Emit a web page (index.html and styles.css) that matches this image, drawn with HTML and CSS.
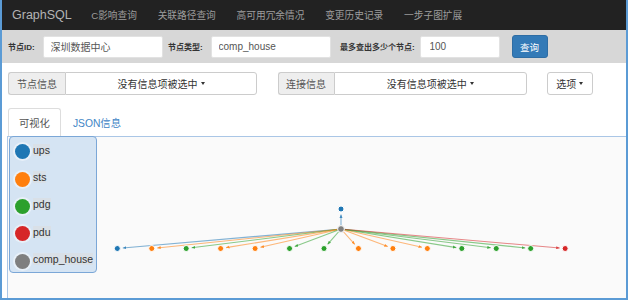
FILE: index.html
```html
<!DOCTYPE html>
<html lang="zh-CN">
<head>
    <meta charset="UTF-8">
    <meta name="viewport" content="width=device-width, initial-scale=1.0">
    <title>GraphSQL</title>
    <link rel="stylesheet" href="styles.css">
</head>
<body>
    <div class="frame">
        <nav class="navbar">
            <span class="brand">GraphSQL</span>
            <a class="nav-link">C影响查询</a>
            <a class="nav-link">关联路径查询</a>
            <a class="nav-link">高可用冗余情况</a>
            <a class="nav-link">变更历史记录</a>
            <a class="nav-link">一步子图扩展</a>
        </nav>

        <form class="query-bar" id="queryForm">
            <label class="lbl lbl-id" for="nodeId">节点ID:</label>
            <input class="field field-id" type="text" id="nodeId" value="深圳数据中心">
            <label class="lbl lbl-type" for="nodeType">节点类型:</label>
            <input class="field field-type" type="text" id="nodeType" value="comp_house">
            <label class="lbl lbl-max" for="maxNodes">最多查出多少个节点:</label>
            <input class="field field-max" type="text" id="maxNodes" value="100">
            <button class="btn-query" type="button">查询</button>
        </form>

        <div class="main">
            <div class="select-row">
                <span class="addon">节点信息</span>
                <button class="select select-node" type="button">没有信息项被选中 <span class="caret"></span></button>
                <span class="addon addon-link">连接信息</span>
                <button class="select select-link" type="button">没有信息项被选中 <span class="caret"></span></button>
                <button class="btn-options" type="button">选项 <span class="caret"></span></button>
            </div>

            <ul class="tabs">
                <li class="tab active">可视化</li>
                <li class="tab">JSON信息</li>
            </ul>

            <div class="graph-panel">
                <svg id="graph" width="618" height="161" viewBox="8 137 618 161"></svg>
                <div class="legend">
                    <div class="legend-item"><span class="dot ups"></span><span class="legend-label">ups</span></div>
                    <div class="legend-item"><span class="dot sts"></span><span class="legend-label">sts</span></div>
                    <div class="legend-item"><span class="dot pdg"></span><span class="legend-label">pdg</span></div>
                    <div class="legend-item"><span class="dot pdu"></span><span class="legend-label">pdu</span></div>
                    <div class="legend-item"><span class="dot comp"></span><span class="legend-label">comp_house</span></div>
                </div>
            </div>
        </div>
    </div>
    <script>
        const NS = "http://www.w3.org/2000/svg";
        const COLORS = {
            ups: "#1f77b4",
            sts: "#ff7f0e",
            pdg: "#2ca02c",
            pdu: "#d62728",
            comp_house: "#7f7f7f"
        };

        const center = { x: 341, y: 229, type: "comp_house" };
        const bottomTypes = ["ups", "sts", "pdg", "sts", "sts", "pdg", "pdg", "sts", "sts", "sts", "pdg", "pdg", "pdg", "pdu"];
        const nodes = [{ x: 341, y: 209, type: "ups" }];
        bottomTypes.forEach((type, i) => {
            nodes.push({ x: 117.3 + i * 34.45, y: 248.5, type: type });
        });

        function el(name, attrs) {
            const node = document.createElementNS(NS, name);
            for (const key in attrs) node.setAttribute(key, attrs[key]);
            return node;
        }

        function drawGraph() {
            const svg = document.getElementById("graph");
            const defs = el("defs", {});
            for (const type in COLORS) {
                const marker = el("marker", {
                    id: "arrow-" + type, viewBox: "0 -3 6 6", refX: 6, refY: 0,
                    markerWidth: 3.5, markerHeight: 3.5, markerUnits: "userSpaceOnUse", orient: "auto"
                });
                marker.appendChild(el("path", { d: "M0,-2.6L6,0L0,2.6", fill: COLORS[type], "fill-opacity": 0.8 }));
                defs.appendChild(marker);
            }
            svg.appendChild(defs);

            // links first so the nodes sit on top
            nodes.forEach(node => {
                const dx = node.x - center.x;
                const dy = node.y - center.y;
                const len = Math.sqrt(dx * dx + dy * dy);
                const endX = node.x - dx / len * 5.5;
                const endY = node.y - dy / len * 5.5;
                svg.appendChild(el("line", {
                    x1: center.x, y1: center.y, x2: endX, y2: endY,
                    class: "link", stroke: COLORS[node.type],
                    "marker-end": "url(#arrow-" + node.type + ")"
                }));
            });

            nodes.concat([center]).forEach(node => {
                svg.appendChild(el("circle", {
                    cx: node.x, cy: node.y, r: node === center ? 3.4 : 3,
                    class: "node", fill: COLORS[node.type]
                }));
            });
        }

        drawGraph();
    </script>
</body>
</html>
```

FILE: styles.css
```css
* {
    box-sizing: border-box;
}
body {
    margin: 0;
    font-family: "Liberation Sans", "Noto Sans CJK SC", sans-serif;
    color: #333333;
    background: #ffffff;
}
.frame {
    height: 300px;
    border: 2px solid #5b9bd5;
    border-top: none;
    display: flex;
    flex-direction: column;
    overflow: hidden;
}
.navbar {
    height: 30px;
    flex-shrink: 0;
    background-color: #222222;
    display: flex;
    align-items: center;
    padding-left: 10px;
    padding-bottom: 1px;
}
.brand {
    font-size: 12.5px;
    color: #b4b4b4;
    margin-right: 9px;
}
.nav-link {
    font-size: 9.7px;
    color: #9d9d9d;
    padding: 0 10.4px;
}
.query-bar {
    height: 33px;
    flex-shrink: 0;
    margin: 0;
    background-color: #d7d7d7;
    display: flex;
    align-items: center;
    padding-left: 6px;
}
.lbl {
    font-size: 8px;
    font-weight: bold;
    color: #333333;
}
.lbl-id {
    width: 34.5px;
}
.lbl-type {
    width: 42.5px;
    margin-left: 5.5px;
}
.lbl-max {
    width: 79.5px;
    margin-left: 9.5px;
}
.field {
    height: 22px;
    border: 1px solid #e2e2e2;
    border-radius: 2px;
    background: #ffffff;
    padding: 0 7px;
    font-family: "Liberation Sans", "Noto Sans CJK SC", sans-serif;
    font-size: 10px;
    color: #555555;
}
.field-id, .field-type {
    width: 120px;
}
.field-max {
    width: 80px;
    padding-left: 9px;
}
.btn-query {
    margin-left: 12px;
    width: 36px;
    height: 23px;
    background-color: #337ab7;
    border: 1px solid #2e6da4;
    border-radius: 3px;
    color: #ffffff;
    font-family: "Liberation Sans", "Noto Sans CJK SC", sans-serif;
    font-size: 9.5px;
    padding: 0;
}
.main {
    flex: 1;
    display: flex;
    flex-direction: column;
    padding-left: 6px;
}
.select-row {
    margin-top: 9px;
    height: 23px;
    display: flex;
}
.addon, .select, .btn-options {
    height: 23px;
    border: 1px solid #cccccc;
    font-family: "Liberation Sans", "Noto Sans CJK SC", sans-serif;
    font-size: 10px;
    display: flex;
    align-items: center;
    justify-content: center;
}
.addon {
    width: 57px;
    background-color: #eeeeee;
    color: #555555;
    border-radius: 3px 0 0 3px;
    border-right: none;
}
.addon-link {
    width: 56px;
    margin-left: 20.5px;
}
.select {
    background: #ffffff;
    color: #333333;
    border-radius: 0 3px 3px 0;
    padding: 0;
}
.select-node {
    width: 192px;
}
.select-link {
    width: 193.5px;
}
.btn-options {
    margin-left: 20px;
    width: 45.5px;
    background: #ffffff;
    color: #333333;
    border-radius: 3px;
    padding: 0;
}
.caret {
    display: inline-block;
    width: 0;
    height: 0;
    margin-left: 3px;
    border-top: 3px solid #333333;
    border-left: 2.5px solid transparent;
    border-right: 2.5px solid transparent;
}
.tabs {
    list-style: none;
    margin: 13px 0 0 0;
    padding: 0;
    height: 28px;
    display: flex;
}
.tab {
    height: 28px;
    padding: 0 10px;
    display: flex;
    align-items: center;
    font-size: 10.3px;
    color: #3f86c6;
    border: 1px solid transparent;
    border-bottom: none;
    border-radius: 3px 3px 0 0;
    margin-right: 1px;
}
.tab.active {
    color: #555555;
    background: #ffffff;
    border-color: #dddddd;
}
.graph-panel {
    position: relative;
    flex: 1;
    margin-left: -1px;
    background-color: #fafafa;
    border-top: 1px solid #aac6e6;
    border-left: 1px solid #aac6e6;
}
#graph {
    display: block;
}
.link {
    stroke-width: 1.1;
    stroke-opacity: 0.55;
}
.node {
    stroke: #ffffff;
    stroke-width: 1;
}
.legend {
    position: absolute;
    top: -1px;
    left: 1px;
    width: 88px;
    height: 137px;
    background-color: #d5e4f3;
    border: 1px solid #7ba7d7;
    border-radius: 4px;
    padding-top: 1px;
}
.legend-item {
    height: 27.4px;
    display: flex;
    align-items: center;
    padding-left: 5px;
}
.dot {
    width: 15px;
    height: 15px;
    border-radius: 50%;
    box-shadow: 0 0 0 2px rgba(255, 255, 255, 0.45);
    flex-shrink: 0;
}
.dot.ups { background-color: #1f77b4; }
.dot.sts { background-color: #ff7f0e; }
.dot.pdg { background-color: #2ca02c; }
.dot.pdu { background-color: #d62728; }
.dot.comp { background-color: #7f7f7f; }
.legend-label {
    margin-left: 3px;
    margin-top: -4px;
    font-size: 10.5px;
    color: #333333;
    background-color: rgba(220, 220, 220, 0.55);
}
```
